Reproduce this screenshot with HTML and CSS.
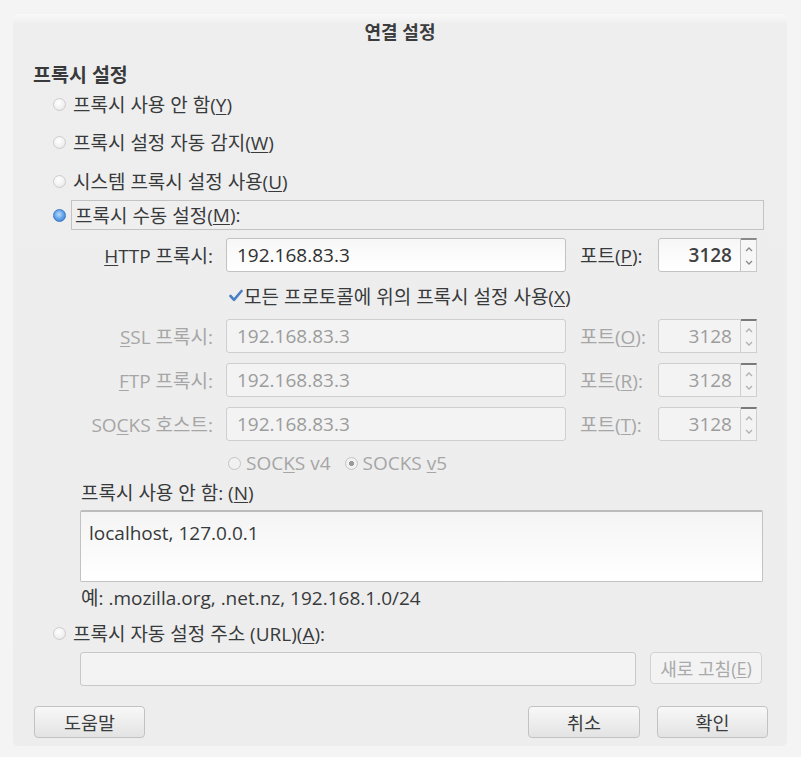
FILE: index.html
```html
<!DOCTYPE html>
<html lang="ko">
<head>
<meta charset="utf-8">
<title>연결 설정</title>
<link rel="stylesheet" href="styles.css">
</head>
<body>
<div class="dialog">
  <div class="title">연결 설정</div>
  <div class="section">프록시 설정</div>

  <div class="radio-row r1"><span class="radio"></span><span class="rlabel">프록시 사용 안 함(<u>Y</u>)</span></div>
  <div class="radio-row r2"><span class="radio"></span><span class="rlabel">프록시 설정 자동 감지(<u>W</u>)</span></div>
  <div class="radio-row r3"><span class="radio"></span><span class="rlabel">시스템 프록시 설정 사용(<u>U</u>)</span></div>
  <div class="radio-row r4"><span class="radio checked"></span><span class="focus">프록시 수동 설정(<u>M</u>):</span></div>

  <div class="manual">
    <div class="plabel"><u>H</u>TTP 프록시:</div>
    <div class="field">192.168.83.3</div>
    <div class="portlabel">포트(<u>P</u>):</div>
    <div class="spin"><div class="num">3128</div><div class="arrows"><svg width="10" height="26" viewBox="0 0 10 26"><path d="M2 8 L5 5 L8 8" fill="none" stroke="#8a8a8a" stroke-width="1.3"/><path d="M2 18 L5 21 L8 18" fill="none" stroke="#8a8a8a" stroke-width="1.3"/></svg></div></div>

    <div class="checkrow"><svg class="check" width="14" height="13" viewBox="0 0 14 13"><path d="M1.5 7 L5 10.8 L12.5 2" fill="none" stroke="#4a7fc4" stroke-width="2.6" stroke-linecap="round" stroke-linejoin="round"/></svg><span>모든 프로토콜에 위의 프록시 설정 사용(<u>X</u>)</span></div>

    <div class="plabel off"><u>S</u>SL 프록시:</div>
    <div class="field off">192.168.83.3</div>
    <div class="portlabel off">포트(<u>O</u>):</div>
    <div class="spin off"><div class="num">3128</div><div class="arrows"><svg width="10" height="26" viewBox="0 0 10 26"><path d="M2 8 L5 5 L8 8" fill="none" stroke="#b0b0b0" stroke-width="1.3"/><path d="M2 18 L5 21 L8 18" fill="none" stroke="#b0b0b0" stroke-width="1.3"/></svg></div></div>

    <div class="plabel off"><u>F</u>TP 프록시:</div>
    <div class="field off">192.168.83.3</div>
    <div class="portlabel off">포트(<u>R</u>):</div>
    <div class="spin off"><div class="num">3128</div><div class="arrows"><svg width="10" height="26" viewBox="0 0 10 26"><path d="M2 8 L5 5 L8 8" fill="none" stroke="#b0b0b0" stroke-width="1.3"/><path d="M2 18 L5 21 L8 18" fill="none" stroke="#b0b0b0" stroke-width="1.3"/></svg></div></div>

    <div class="plabel off">SO<u>C</u>KS 호스트:</div>
    <div class="field off">192.168.83.3</div>
    <div class="portlabel off">포트(<u>T</u>):</div>
    <div class="spin off"><div class="num">3128</div><div class="arrows"><svg width="10" height="26" viewBox="0 0 10 26"><path d="M2 8 L5 5 L8 8" fill="none" stroke="#b0b0b0" stroke-width="1.3"/><path d="M2 18 L5 21 L8 18" fill="none" stroke="#b0b0b0" stroke-width="1.3"/></svg></div></div>

    <div class="socksrow off"><span class="radio dis"></span><span class="slabel">SOC<u>K</u>S v4</span><span class="radio dis dot"></span><span class="slabel">SOCKS <u>v</u>5</span></div>
  </div>

  <div class="nplabel">프록시 사용 안 함: (<u>N</u>)</div>
  <div class="textarea">localhost, 127.0.0.1</div>
  <div class="example">예: .mozilla.org, .net.nz, 192.168.1.0/24</div>

  <div class="radio-row r5"><span class="radio"></span><span class="rlabel">프록시 자동 설정 주소 (URL)(<u>A</u>):</span></div>
  <div class="urlrow">
    <div class="urlfield"></div>
    <div class="btn refresh">새로 고침(<u>E</u>)</div>
  </div>

  <div class="buttons">
    <div class="btn help">도움말</div>
    <div class="spacer"></div>
    <div class="btn cancel">취소</div>
    <div class="btn ok">확인</div>
  </div>
</div>
</body>
</html>
```
FILE: styles.css
```css
* { box-sizing: border-box; }
html, body { margin: 0; padding: 0; }
body {
  background: #f4f4f4;
  font-family: "Open Sans", "Noto Sans CJK KR", sans-serif;
  font-size: 19px;
  color: #383a3b;
  width: 801px;
  height: 757px;
  overflow: hidden;
}
u { text-decoration: underline; text-underline-offset: 2px; text-decoration-thickness: 1px; }

.dialog {
  margin: 14px 0 0 13px;
  width: 774px;
  height: 732px;
  background: linear-gradient(#f9f9f9 0, #eeeeee 10px, #ededed 100%);
  border-radius: 5px;
  padding: 0 20px 8px 20px;
  display: flex;
  flex-direction: column;
}

.title {
  height: 36px;
  line-height: 36px;
  text-align: center;
  font-weight: bold;
  font-size: 18px;
  color: #3a3c3d;
}
.section {
  margin-top: 10px;
  height: 30px;
  line-height: 30px;
  font-weight: bold;
  font-size: 19.5px;
}

.radio-row {
  display: flex;
  align-items: center;
  height: 28px;
}
.r2 { margin-top: 10px; }
.r3 { margin-top: 11px; }
.r4 { margin-top: 5px; height: 30px; align-items: stretch; }
.r4 .radio { align-self: center; }
.r5 { margin-top: 9px; }

.radio {
  width: 13px;
  height: 13px;
  border-radius: 50%;
  margin-left: 20px;
  border: 1px solid #cdcdcd;
  background: radial-gradient(circle at 40% 35%, #ffffff 0, #f0f0f0 60%, #dadada 100%);
  flex: none;
}
.radio.checked {
  border: 1px solid #3b78c4;
  background: radial-gradient(circle at 45% 40%, #b9dbff 0, #6aa8ec 45%, #2f6fc0 100%);
}
.rlabel { margin-left: 7px; white-space: nowrap; }
.focus {
  margin-left: 5px;
  padding-left: 3px;
  flex: 1;
  border: 1px solid #c3c3c3;
  background: #efefef;
  display: flex;
  align-items: center;
  margin-right: 3px;
}

.manual {
  margin-top: 8px;
  display: grid;
  grid-template-columns: 193px 340px 92px 99px;
  grid-template-rows: 34px 27px 34px 34px 34px 24px;
  row-gap: 10px;
}
.plabel {
  text-align: right;
  padding-right: 13px;
  align-self: center;
  white-space: nowrap;
}
.field {
  border: 1px solid #c2c2c2;
  border-radius: 3px;
  background: linear-gradient(#f7f7f7, #ffffff);
  padding-left: 10px;
  display: flex;
  align-items: center;
  font-size: 19px;
  color: #2f3030;
}
.portlabel {
  padding-left: 14px;
  align-self: center;
  white-space: nowrap;
}
.spin {
  display: flex;
}
.spin .num {
  width: 83px;
  border: 1px solid #c2c2c2;
  border-radius: 3px 0 0 3px;
  background: linear-gradient(#f7f7f7, #ffffff);
  display: flex;
  align-items: center;
  justify-content: flex-end;
  padding-right: 8px;
  font-size: 19px;
  font-weight: 600;
  color: #404040;
}
.spin .arrows {
  width: 16px;
  border: 1px solid #c8c8c8;
  border-left: none;
  border-top: 2px solid #8a8a8a;
  background: #f7f7f7;
  display: flex;
  align-items: center;
  justify-content: center;
}
.off { color: #a6a6a6; }
.field.off { background: #f3f3f3; border-color: #cfcfcf; color: #9c9c9c; }
.spin.off .num { background: #f3f3f3; border-color: #cfcfcf; color: #9c9c9c; font-weight: normal; }
.spin.off .arrows { background: #f3f3f3; border-color: #cfcfcf; border-top-color: #7a7a7a; }

.checkrow {
  grid-column: 2 / 5;
  display: flex;
  align-items: center;
  padding-left: 3px;
  white-space: nowrap;
}
.check { margin-right: 1px; flex: none; }

.socksrow {
  grid-column: 2 / 5;
  display: flex;
  align-items: center;
  padding-left: 2px;
}
.socksrow .radio { margin-left: 0; }
.radio.dis {
  border: 1px solid #c4c4c4;
  background: #f1f1f1;
}
.radio.dot {
  margin-left: 14px;
  background: radial-gradient(circle, #9a9a9a 0, #9a9a9a 30%, #f1f1f1 36%);
}
.slabel { margin-left: 5px; color: #a6a6a6; }

.nplabel {
  margin-top: 6px;
  height: 24px;
  line-height: 24px;
  margin-left: 48px;
}
.textarea {
  margin-top: 5px;
  margin-left: 47px;
  width: 683px;
  height: 72px;
  border: 1px solid #c2c2c2;
  border-top: 2px solid #bcbcbc;
  border-radius: 2px;
  background: linear-gradient(#f4f4f4, #ffffff);
  padding: 9px 8px;
  line-height: 24px;
}
.example {
  margin-top: 4px;
  height: 24px;
  line-height: 24px;
  margin-left: 48px;
}

.urlrow {
  margin-top: 5px;
  display: flex;
  align-items: flex-start;
  margin-left: 47px;
}
.urlfield {
  width: 556px;
  height: 34px;
  border: 1px solid #c8c8c8;
  border-radius: 3px;
  background: #f3f3f3;
}
.btn {
  height: 32px;
  border: 1px solid #c2c2c2;
  border-radius: 4px;
  background: linear-gradient(#f8f8f8, #e3e3e3);
  display: flex;
  align-items: center;
  justify-content: center;
  font-size: 18.5px;
  color: #3a3c3d;
  white-space: nowrap;
}
.refresh {
  margin-left: 14px;
  width: 112px;
  background: #f3f3f3;
  border-color: #d2d2d2;
  color: #aaaaaa;
  font-size: 18px;
}

.buttons {
  margin-top: 20px;
  display: flex;
  margin-right: -1px;
}
.help { width: 111px; margin-left: 1px; }
.spacer { flex: 1; }
.cancel { width: 112px; }
.ok { width: 111px; margin-left: 17px; }
```
